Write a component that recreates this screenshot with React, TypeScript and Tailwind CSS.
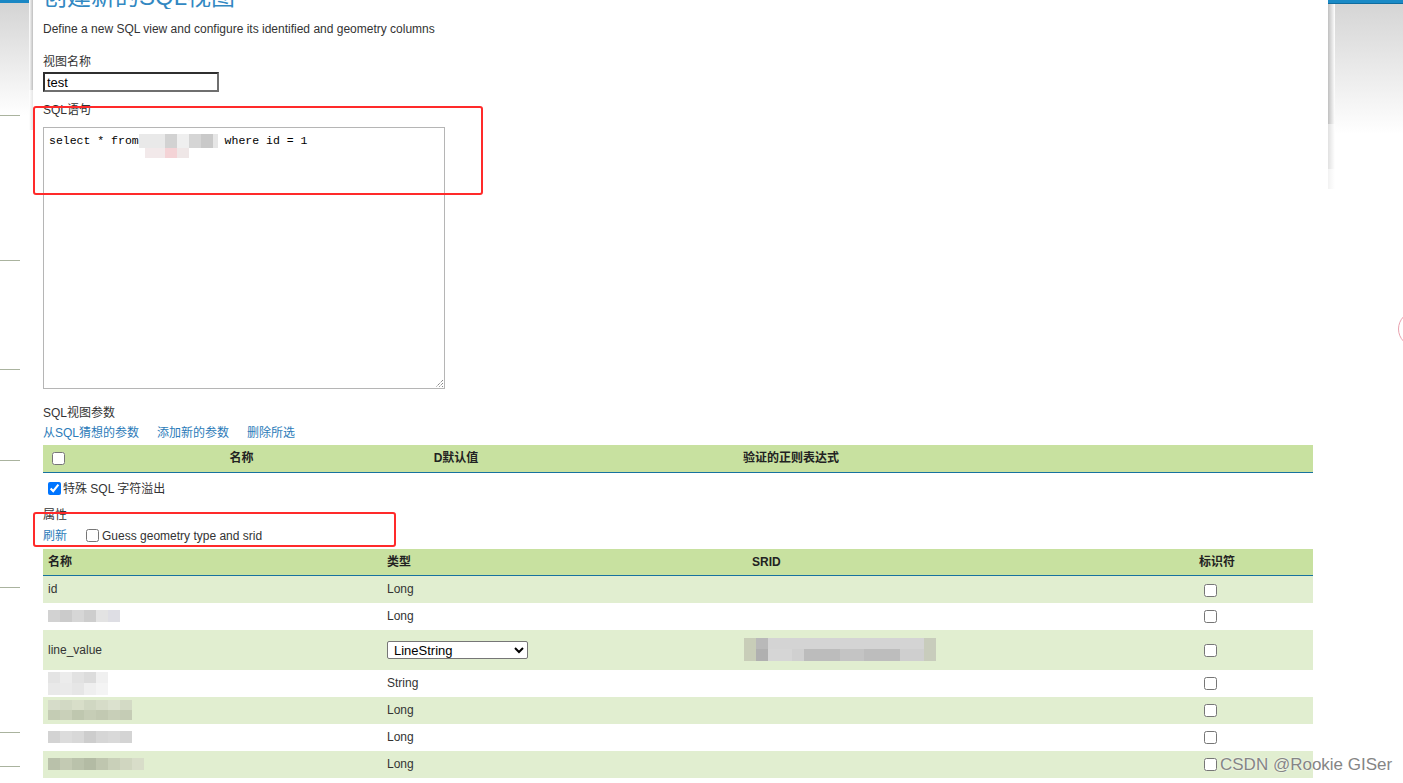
import React from 'react';

type Cell = [number, string];
type MosaicRow = { h: number; x?: number; cells: Cell[] };

// pixelated blur blocks, as in the redacted screenshot
const Mosaic: React.FC<{ rows: MosaicRow[] }> = ({ rows }) => (
  <div className="flex flex-col">
    {rows.map((row, i) => (
      <div key={i} className="flex" style={{ height: row.h, marginLeft: row.x ?? 0 }}>
        {row.cells.map(([w, c], j) => (
          <div key={j} style={{ width: w, backgroundColor: c }} />
        ))}
      </div>
    ))}
  </div>
);

const sqlBlur: MosaicRow[] = [
  { h: 14, cells: [[26, '#e9e9e9'], [12, '#d2d2d2'], [12, '#efefef'], [12, '#d5d5d5'], [12, '#c9c9c9'], [5, '#e6e6e6']] },
  { h: 10, x: 6, cells: [[20, '#f2e9ea'], [12, '#f4d3d6'], [12, '#efe7e7']] },
];

const sridBlur: MosaicRow[] = [
  { h: 11, cells: [[12, '#c8cdb8'], [12, '#b9b9b9'], [156, '#d4d4d4'], [12, '#c8ccbc']] },
  { h: 12, cells: [[12, '#c8cdb8'], [12, '#b0b0b0'], [24, '#d6d6d6'], [12, '#d0d0d0'], [36, '#bcbcbc'], [24, '#c4c4c4'], [36, '#bdbdbd'], [24, '#cfcfcf'], [12, '#c8ccbc']] },
];

type Attr = {
  name: string | MosaicRow[];
  type: string;
  srid?: MosaicRow[];
  select?: boolean;
};

const attrs: Attr[] = [
  { name: 'id', type: 'Long' },
  {
    name: [{ h: 12, cells: [[12, '#d2d2d2'], [12, '#cbcbcb'], [12, '#d6d6d6'], [12, '#cdcdcd'], [12, '#e3e3e3'], [12, '#dedee4']] }],
    type: 'Long',
  },
  { name: 'line_value', type: 'LineString', select: true, srid: sridBlur },
  {
    name: [
      { h: 11, cells: [[12, '#e4e4e4'], [12, '#ececec'], [12, '#e2e2e2'], [12, '#dcdcdc'], [12, '#f0f0f0']] },
      { h: 12, cells: [[12, '#e9e9e9'], [12, '#eaeaea'], [12, '#e6e6e6'], [12, '#efefef'], [12, '#f4f4f4']] },
    ],
    type: 'String',
  },
  {
    name: [
      { h: 10, cells: [[12, '#d6dcc9'], [12, '#d2d9c4'], [12, '#d8dec9'], [12, '#d0d7c2'], [12, '#d6dcc8'], [12, '#dbe1ce'], [12, '#d3dac5']] },
      { h: 10, cells: [[12, '#c4ccb4'], [12, '#c9d0b9'], [12, '#bfc7af'], [12, '#c6cdb6'], [12, '#c2c9b2'], [12, '#c8cfb8'], [12, '#c5ccb5']] },
    ],
    type: 'Long',
  },
  {
    name: [{ h: 12, cells: [[12, '#d3d3d3'], [12, '#dcdcdc'], [12, '#d8d8d8'], [12, '#cdcdcd'], [12, '#d6d6d6'], [12, '#d9d9d9'], [12, '#d4d4d4']] }],
    type: 'Long',
  },
  {
    name: [{ h: 12, cells: [[12, '#b9c1aa'], [12, '#c3cab3'], [12, '#bac2ab'], [12, '#b3bba4'], [12, '#bfc6af'], [12, '#c9d0b9'], [12, '#d0d6c0'], [12, '#d8ddc9']] }],
    type: 'Long',
  },
];

const Rule: React.FC = () => <div className="h-px w-[20px] bg-[#aab39e]" />;

const App: React.FC = () => {
  return (
    <div className="relative flex h-[783px] w-[1403px] overflow-hidden bg-white font-['Liberation_Sans','Noto_Sans_CJK_SC',sans-serif] text-xs text-[#333]">
      {/* background page, left side */}
      <div className="flex w-[33px] shrink-0">
        <div className="flex flex-1 flex-col">
          <div className="h-[3px] bg-[#1a87c4]" />
          <div className="h-[112px] bg-linear-to-b from-[#d4d4d4] to-white" />
          <Rule />
          <div className="h-[144px]" />
          <Rule />
          <div className="h-[108px]" />
          <Rule />
          <div className="h-[90px]" />
          <Rule />
          <div className="h-[126px]" />
          <Rule />
          <div className="h-[144px]" />
          <Rule />
          <div className="h-[33px]" />
          <Rule />
        </div>
        <div className="flex w-[4px] flex-col">
          <div className="h-[90px] bg-linear-to-r from-transparent to-black/25" />
          <div className="h-[40px] bg-linear-to-r from-transparent to-black/10" />
        </div>
      </div>

      {/* dialog */}
      <div className="flex w-[1295px] shrink-0 flex-col bg-white pl-[10px]">
        <div className="flex h-[9px] items-end overflow-hidden">
          <div className="text-[24px] leading-[24px] text-[#3288c2]">创建新的SQL视图</div>
        </div>
        <div className="mt-[12px] leading-4">Define a new SQL view and configure its identified and geometry columns</div>

        <div className="mt-[17px] leading-4">视图名称</div>
        <input
          readOnly
          value="test"
          className="mt-[2px] h-[20px] w-[176px] border-2 border-t-[#2f2f2f] border-l-[#2f2f2f] border-b-[#6f6f6f] border-r-[#6f6f6f] px-[2px] text-[13px] text-black outline-none"
        />

        <div className="mt-[10px] leading-4">SQL语句</div>
        <div className="mt-[9px] flex h-[262px] w-[402px] flex-col border border-[#b5b5b5] pl-[5px] pt-[6px] font-['Liberation_Mono',monospace] text-[11.5px] text-black">
          <div className="flex items-start leading-[14px]">
            <span className="whitespace-pre">select * from</span>
            <Mosaic rows={sqlBlur} />
            <span className="whitespace-pre"> where id = 1</span>
          </div>
          <div className="flex-1" />
          <div className="flex justify-end">
            <svg width="9" height="9" viewBox="0 0 9 9">
              <path d="M8 1 L1 8 M8 4 L4 8 M8 7 L7 8" stroke="#555" strokeWidth="1" strokeDasharray="1 1" />
            </svg>
          </div>
        </div>

        <div className="mt-[16px] leading-4">SQL视图参数</div>
        <div className="mt-[4px] flex gap-[18px] leading-4 text-[#2b7bb9]">
          <span>从SQL猜想的参数</span>
          <span>添加新的参数</span>
          <span>删除所选</span>
        </div>

        <table className="mt-[4px] w-[1270px] table-fixed border-collapse">
          <colgroup>
            <col className="w-[30px]" />
            <col className="w-[337px]" />
            <col className="w-[92px]" />
            <col className="w-[578px]" />
            <col />
          </colgroup>
          <thead>
            <tr className="h-[27px] border-b border-[#17729f] bg-[#c8e1a0] font-bold text-[#222]">
              <th className="pl-[9px] text-left align-middle">
                <input type="checkbox" className="block" />
              </th>
              <th className="text-center">名称</th>
              <th className="text-center">D默认值</th>
              <th className="text-center">验证的正则表达式</th>
              <th />
            </tr>
          </thead>
        </table>

        <label className="mt-[8px] flex h-[16px] items-center gap-[2px] pl-[5px]">
          <input type="checkbox" defaultChecked className="m-0 h-[13px] w-[13px]" />
          <span>特殊 SQL 字符溢出</span>
        </label>

        <div className="mt-[10px] leading-4">属性</div>
        <div className="mt-[5px] flex h-[16px] items-center">
          <span className="text-[#2b7bb9]">刷新</span>
          <input type="checkbox" className="m-0 ml-[19px] h-[13px] w-[13px]" />
          <span className="ml-[3px]">Guess geometry type and srid</span>
        </div>

        <table className="mt-[5px] w-[1270px] table-fixed border-collapse">
          <colgroup>
            <col className="w-[339px]" />
            <col className="w-[340px]" />
            <col className="w-[399px]" />
            <col />
          </colgroup>
          <thead>
            <tr className="h-[27px] border-b border-[#17729f] bg-[#c8e1a0] font-bold text-[#222]">
              <th className="pl-[5px] text-left">名称</th>
              <th className="pl-[5px] text-left">类型</th>
              <th className="pl-[30px] text-left">SRID</th>
              <th className="text-center">标识符</th>
            </tr>
          </thead>
          <tbody>
            {attrs.map((a, i) => (
              <tr key={i} className={`${a.select ? 'h-[40px]' : 'h-[27px]'} ${i % 2 === 0 ? 'bg-[#e1eed0]' : 'bg-white'}`}>
                <td className="pl-[5px] align-middle">
                  {typeof a.name === 'string' ? a.name : <Mosaic rows={a.name} />}
                </td>
                <td className="pl-[5px] align-middle">
                  {a.select ? (
                    <select className="h-[18px] w-[141px] rounded-[2px] border border-[#767676] bg-white pl-[2px] text-[13px] text-black">
                      <option>LineString</option>
                    </select>
                  ) : (
                    a.type
                  )}
                </td>
                <td className="pl-[22px] align-middle">{a.srid && <Mosaic rows={a.srid} />}</td>
                <td className="pr-[13px] text-center align-middle">
                  <input type="checkbox" className="m-0 h-[13px] w-[13px] align-middle" />
                </td>
              </tr>
            ))}
          </tbody>
        </table>
      </div>

      {/* background page, right side */}
      <div className="flex flex-1 flex-col">
        <div className="h-[4px] border-b border-[#0f6c9f] bg-[#1a8ac6]" />
        <div className="flex">
          <div className="flex w-[7px] flex-col">
            <div className="h-[120px] bg-linear-to-r from-black/25 to-transparent" />
            <div className="h-[45px] bg-linear-to-r from-black/12 to-transparent" />
            <div className="h-[20px] bg-linear-to-r from-black/5 to-transparent" />
          </div>
          <div className="h-[130px] flex-1 bg-linear-to-b from-[#d5d5d5] to-white" />
        </div>
      </div>

      {/* annotation boxes drawn on the screenshot */}
      <div className="absolute left-[33px] top-[106px] h-[89px] w-[450px] rounded-[3px] border-2 border-[#ff2a2a]" />
      <div className="absolute left-[33px] top-[512px] h-[35px] w-[363px] rounded-[3px] border-2 border-[#ff2a2a]" />

      <div className="absolute left-[1398px] top-[311px] h-[36px] w-[36px] rounded-full border border-[#e9a1ae]" />

      <div className="absolute left-[1220px] top-[755px] text-[17px] leading-[20px] text-[#858585] [text-shadow:0_0_2px_#fff]">
        CSDN @Rookie GISer
      </div>
    </div>
  );
};

export default App;
